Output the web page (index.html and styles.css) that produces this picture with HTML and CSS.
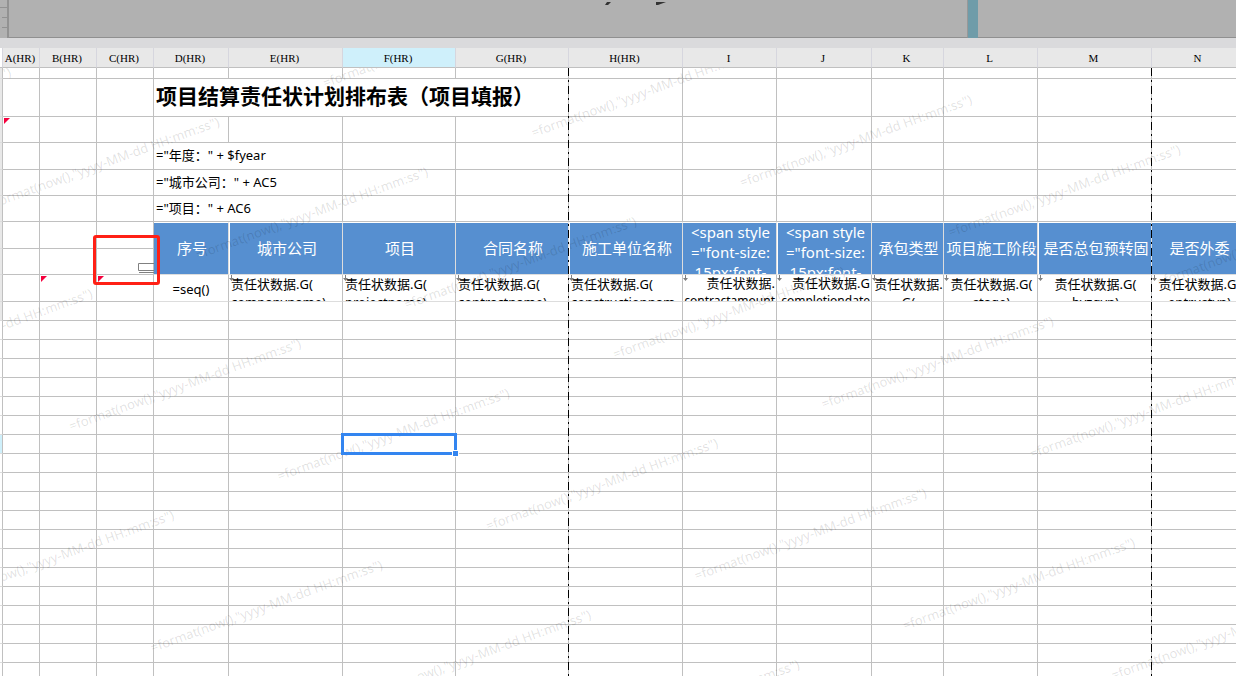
FILE: index.html
```html
<!DOCTYPE html>
<html lang="zh-CN">
<head>
<meta charset="utf-8">
<title>项目结算责任状计划排布表</title>
<link rel="stylesheet" href="styles.css">
</head>
<body>
<main class="app">
  <header class="preview">
    <div class="ruler"><i class="tick tick-long"></i><i class="tick"></i><i class="tick"></i></div>
    <div class="page">
      <svg class="page-art" width="64" height="4" viewBox="0 0 64 4"><path d="M0 3L2 0H6L3 3ZM51 0H61L53 3H51Z" fill="#333"/></svg>
    </div>
    <div class="splitter"></div>
    <div class="side"></div>
  </header>
  <section class="sheet">
    <table class="grid">
      <colgroup>
        <col class="w-rowhead"><col class="w-37"><col class="w-57"><col class="w-57"><col class="w-75"><col class="w-114"><col class="w-113"><col class="w-113"><col class="w-114"><col class="w-94"><col class="w-95"><col class="w-72"><col class="w-94"><col class="w-114"><col class="w-94">
      </colgroup>
      <thead>
        <tr class="letters"><th class="corner"></th><th>A(HR)</th><th>B(HR)</th><th>C(HR)</th><th>D(HR)</th><th>E(HR)</th><th class="active">F(HR)</th><th>G(HR)</th><th>H(HR)</th><th>I</th><th>J</th><th>K</th><th>L</th><th>M</th><th>N</th></tr>
      </thead>
      <tbody id="rows">
        <tr class="h11"><th class="used"></th><td></td><td></td><td></td><td></td><td></td><td></td><td></td><td></td><td></td><td></td><td></td><td></td><td></td><td></td></tr>
        <tr class="h38"><th class="used"></th><td></td><td></td><td></td><td colspan="4" class="title">项目结算责任状计划排布表（项目填报）</td><td></td><td></td><td></td><td></td><td></td><td></td><td></td></tr>
        <tr class="h26"><th class="used"></th><td class="flag"></td><td></td><td></td><td></td><td></td><td></td><td></td><td></td><td></td><td></td><td></td><td></td><td></td><td></td></tr>
        <tr class="h27"><th class="used"></th><td></td><td></td><td></td><td colspan="2" class="meta">="年度：" + $fyear</td><td></td><td></td><td></td><td></td><td></td><td></td><td></td><td></td><td></td></tr>
        <tr class="h26"><th class="used"></th><td></td><td></td><td></td><td colspan="2" class="meta">="城市公司：" + AC5</td><td></td><td></td><td></td><td></td><td></td><td></td><td></td><td></td><td></td></tr>
        <tr class="h26"><th class="used"></th><td></td><td></td><td></td><td colspan="2" class="meta">="项目：" + AC6</td><td></td><td></td><td></td><td></td><td></td><td></td><td></td><td></td><td></td></tr>
        <tr class="h27 heads"><th class="used"></th><td></td><td></td><td></td>
          <td rowspan="2" class="head"><div>序号</div></td>
          <td rowspan="2" class="head gap"><div>城市公司</div></td>
          <td rowspan="2" class="head"><div>项目</div></td>
          <td rowspan="2" class="head"><div>合同名称</div></td>
          <td rowspan="2" class="head gap"><div>施工单位名称</div></td>
          <td rowspan="2" class="head"><div class="long">&lt;span style<br>="font-size:<br>15px;font-</div></td>
          <td rowspan="2" class="head gap"><div class="long">&lt;span style<br>="font-size:<br>15px;font-</div></td>
          <td rowspan="2" class="head"><div>承包类型</div></td>
          <td rowspan="2" class="head"><div>项目施工阶段</div></td>
          <td rowspan="2" class="head gap"><div>是否总包预转固</div></td>
          <td rowspan="2" class="head"><div>是否外委</div></td></tr>
        <tr class="h26"><th class="used"></th><td></td><td></td><td class="marked"><svg class="widget" width="16" height="10" viewBox="0 0 16 10"><path d="M16 .5H.5V7.5H16M1 9.5H16" fill="none" stroke="#808080"/></svg><span class="callout"></span></td></tr>
        <tr class="h27 data"><th class="used"></th><td></td><td class="flag"></td><td class="flag"></td>
          <td class="light"><div class="seq">=seq()</div></td>
          <td class="light bound"><div>责任状数据.G(<br>companyname)</div></td>
          <td class="light bound"><div>责任状数据.G(<br>projectname)</div></td>
          <td class="light bound"><div>责任状数据.G(<br>contractname)</div></td>
          <td class="light bound"><div>责任状数据.G(<br>constructionnam</div></td>
          <td class="light bound"><div class="number">责任状数据.<br><span class="field">contractamount</span></div></td>
          <td class="light bound"><div class="number">责任状数据.G<br><span class="field">completiondate</span></div></td>
          <td class="light bound"><div class="middle">责任状数据.<br>G(</div></td>
          <td class="light bound"><div class="middle">责任状数据.G(<br>stage)</div></td>
          <td class="light bound"><div class="middle">责任状数据.G(<br>byzgyn)</div></td>
          <td class="light bound"><div class="middle">责任状数据.G(<br>entrustyn)</div></td></tr>
      </tbody>
    </table>
    <svg class="overlay" id="overlay" aria-hidden="true">
      <path class="page-break" d="M565.5 0V2000M1148.5 0V2000"/>
    </svg>
  </section>
</main>
<script src="script.js"></script>
</body>
</html>
```
FILE: styles.css
```css
* { box-sizing: border-box; }
body { margin: 0; background: #fff; color: #000; font-family: "Noto Sans", "Noto Sans CJK SC", sans-serif; }
.app { height: 100vh; display: flex; flex-direction: column; overflow: hidden; }

.preview { display: flex; flex: none; height: 48px; border-bottom: 10px solid #dadadc; background: #b1b1b1; }
.ruler { display: flex; flex-direction: column; gap: 9px; width: 9px; padding-top: 7px; align-items: flex-end; border-right: 2px solid #929292; }
.tick { flex: none; width: 5px; height: 1px; background: #929292; }
.tick-long { width: 7px; }
.page { flex: 1; padding-left: 596px; border-right: 1px solid #989898; border-bottom: 1px solid #909090; line-height: 0; }
.splitter { width: 10px; background: #6f9ca9; }
.side { width: 258px; border-bottom: 1px solid #909090; }

.sheet { position: relative; flex: 1; overflow: hidden; }
.grid { table-layout: fixed; width: 1246px; border-collapse: separate; border-spacing: 0; }
.w-rowhead { width: 3px; }
.w-37 { width: 37px; }
.w-57 { width: 57px; }
.w-72 { width: 72px; }
.w-75 { width: 75px; }
.w-94 { width: 94px; }
.w-95 { width: 95px; }
.w-113 { width: 113px; }
.w-114 { width: 114px; }
th, td { position: relative; padding: 0; font-weight: 400; border-right: 1px solid #c0c0c0; border-bottom: 1px solid #c0c0c0; white-space: nowrap; }
tbody th { border-bottom-color: #ddd; }
tbody th.used { background: #e8e8e8; }
tbody th.active { background: #cff0fb; }

.letters { height: 20px; }
.letters th { padding: 1px 2px 0 0; background: #e8e8e8; border-right-color: #d6d6de; font-family: "Liberation Serif", serif; font-size: 11px; line-height: 18px; }
.letters .active { background: #cff0fb; }
.letters .corner { padding: 0; background: #fff; }
.h11 { height: 11px; }
.h19 { height: 19px; }
.h26 { height: 26px; }
.h27 { height: 27px; }
.h38 { height: 38px; }

.title { padding: 0 0 4px 2px; font-size: 21px; line-height: 30px; font-weight: 700; }
.meta { padding: 0 0 2px 2px; font-size: 13px; line-height: 20px; }

.head { border-color: #ddd; border-top: 1px solid #fff; background: #568fd0; color: #fff; font-size: 15px; }
.head.gap { border-left: 1px solid #fff; }
.head div { height: 50px; padding-left: 2px; line-height: 48px; overflow: hidden; text-align: center; }
.head .long { height: 52px; margin-top: -2px; line-height: 20px; }

.light { border-bottom-color: #ddd; }
.data div { height: 26px; padding-left: 2px; overflow: hidden; font-size: 13px; line-height: 18px; }
.data .seq { padding: 0; line-height: 28px; text-align: center; }
.data .number { padding: 0 1px 0 0; line-height: 17px; text-align: right; }
.data .middle { padding: 0 0 0 2px; text-align: center; }
.field { font-size: 12px; }

.bound-mark { position: absolute; left: 0; top: 0; }
.flag::before { content: ""; position: absolute; left: 1px; top: 1px; border-top: 6px solid #f5003d; border-right: 6px solid transparent; }
.widget { position: absolute; right: -1px; bottom: 1px; }
.callout { position: absolute; z-index: 3; left: -4px; right: -7px; top: -14px; bottom: -11px; border: 3px solid #ff2015; border-radius: 3px; }
.selection { position: absolute; z-index: 2; inset: -2px; border: 3px solid #3385f0; }
.selection::after { content: ""; position: absolute; right: -5px; bottom: -5px; width: 5px; height: 5px; border: 1px solid #fff; background: #3385f0; }

.overlay { position: absolute; z-index: 1; left: 3px; top: 20px; width: calc(100% - 3px); height: 100%; }
.page-break { stroke: #000; stroke-dasharray: 8 4 2 4; fill: none; }
.watermark { font-size: 13px; fill: #000; fill-opacity: 0.12; }
```
FILE: script.js
```js
const SVG = "http://www.w3.org/2000/svg";
const rows = document.getElementById("rows");
const overlay = document.getElementById("overlay");

// Empty rows below the template rows; the eighth holds the current cell.
for (let r = 0; r < 30; r++) {
  const tr = document.createElement("tr");
  tr.className = "h19";
  const th = document.createElement("th");
  if (r === 0) th.className = "used";
  if (r === 7) th.className = "active";
  tr.append(th);
  for (let c = 0; c < 14; c++) tr.append(document.createElement("td"));
  if (r === 7) {
    const box = document.createElement("span");
    box.className = "selection";
    tr.children[6].append(box);
  }
  rows.append(tr);
}

// Down arrow in the corner of every data-bound cell.
for (const cell of document.querySelectorAll(".bound")) {
  cell.insertAdjacentHTML("afterbegin",
    '<svg class="bound-mark" width="5" height="6" viewBox="0 0 5 6"><path d="M2 0H3V3H5L2.5 6L0 3H2Z" fill="#808080"/></svg>');
}

// Slanted watermark repeated over the sheet.
for (let j = -2; j <= 3; j++) {
  for (let i = -6; i <= 6; i++) {
    const x = 612 + i * 208.5 + j * 81.5;
    const y = 291 + i * 49.8 + j * 221.5;
    if (x < -260 || x > 1300 || y < -10 || y > 760) continue;
    const t = document.createElementNS(SVG, "text");
    t.setAttribute("class", "watermark");
    t.setAttribute("transform", `translate(${x} ${y}) rotate(-20)`);
    t.textContent = '=format(now(),"yyyy-MM-dd HH:mm:ss")';
    overlay.append(t);
  }
}
```
